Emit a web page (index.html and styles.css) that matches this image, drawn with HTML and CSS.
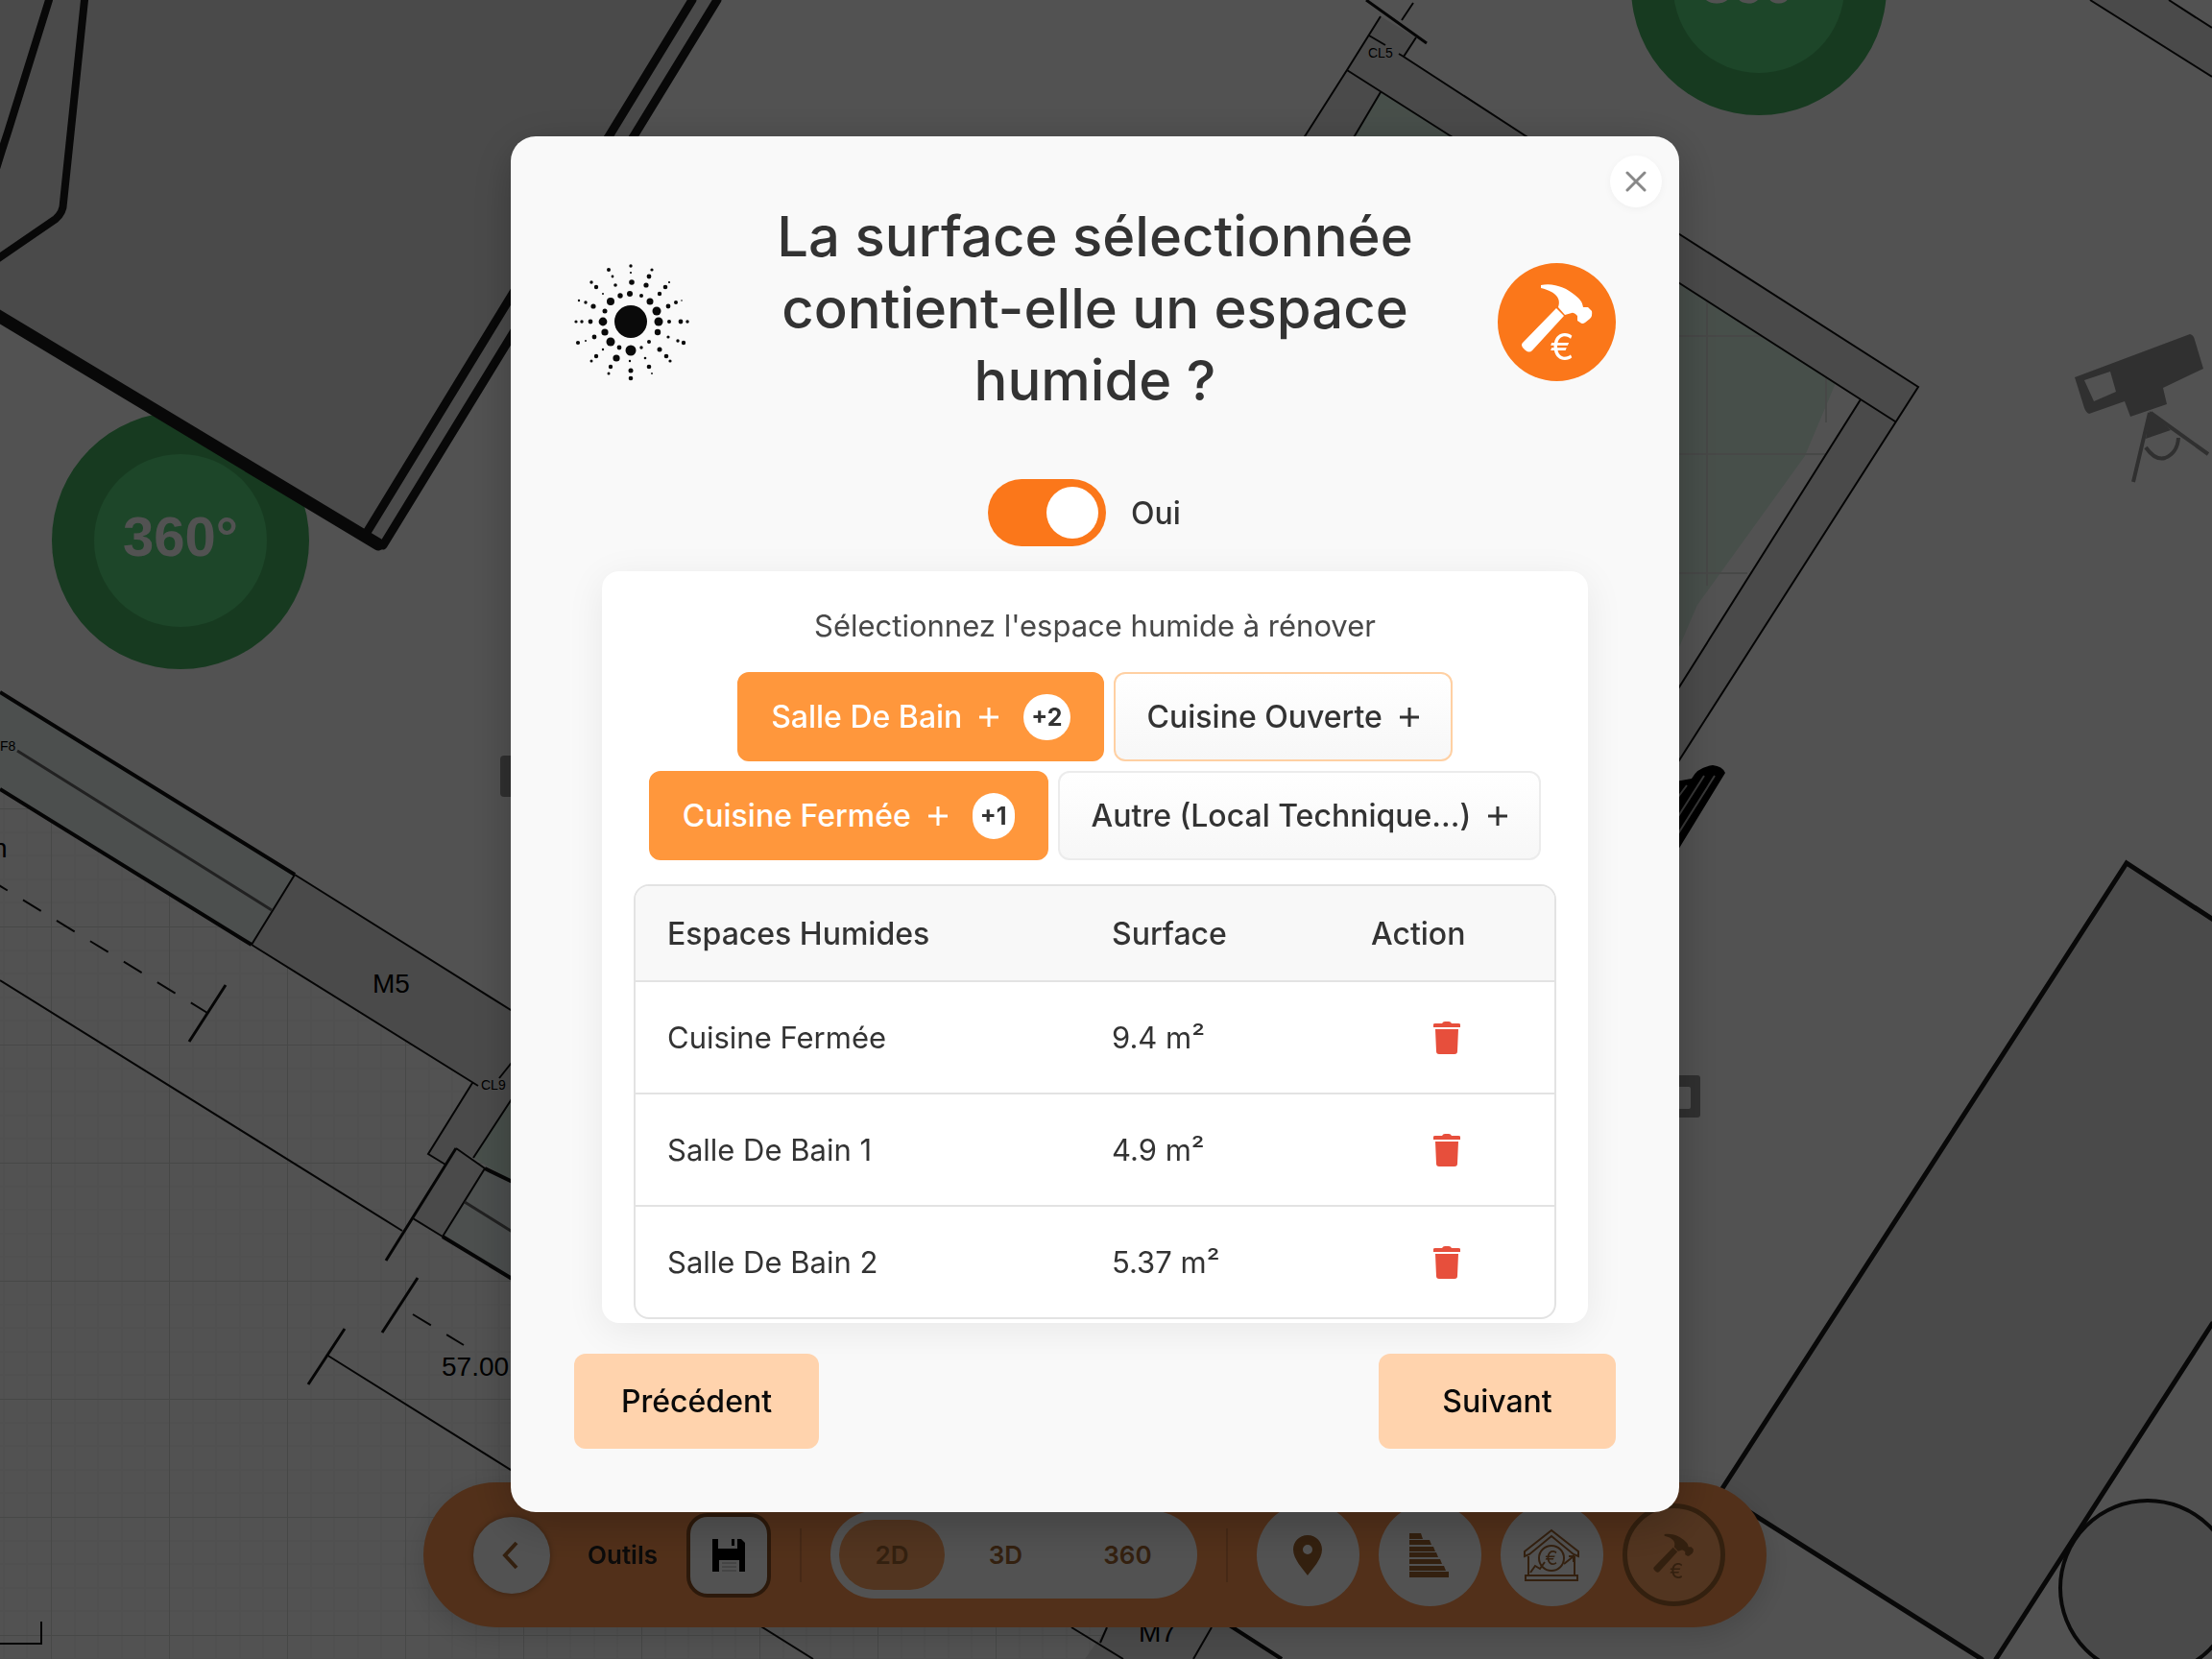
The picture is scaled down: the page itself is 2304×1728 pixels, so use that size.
FILE: index.html
```html
<!DOCTYPE html>
<html lang="fr">
<head>
    <meta charset="UTF-8">
    <meta name="viewport" content="width=device-width, initial-scale=1.0">
    <title>Espace humide</title>
    <link rel="stylesheet" href="styles.css">
</head>
<body>
    <!-- Plan 2D -->
    <svg class="plan" viewBox="0 0 2304 1728" preserveAspectRatio="xMidYMid slice" aria-hidden="true">
        <defs>
            <pattern id="grid" x="53" y="104" width="123" height="123" patternUnits="userSpaceOnUse">
                <path class="grid-minor" d="M25 0V123M49 0V123M74 0V123M98 0V123M0 25H123M0 49H123M0 74H123M0 98H123"/>
                <path class="grid-major" d="M0 0V123M0 0H123"/>
            </pattern>
        </defs>
        <rect class="floor" width="2304" height="1728"/>
        <path fill="url(#grid)" d="M0 721L307 911L532 1052L1276 1530V1728H0Z"/>

        <!-- murs -->
        <path class="wall" d="M307 911L540 1057V1157L262 984Z"/>
        <path class="wall" d="M492 1128L540 1098V1140L493 1206L475 1196L464 1213L446 1202Z"/>
        <path class="wall" d="M475 1196L505 1217L461 1288L430 1269Z"/>
        <path class="wall" d="M1438 17L1475 39L1462 59L1602 150H1524L1403 73Z"/>
        <path class="wall" d="M1403 73L1438 96L1406 150H1354Z"/>
        <path class="wall" d="M2177 0L2304 80V29L2259 0Z"/>
        <path class="wall" d="M1740 238L1998 403L1740 806V730L1938 416L1740 289Z"/>
        <path class="wall" d="M1153 1695L1130 1728H1335L1276 1690Z"/>

        <!-- vitrages -->
        <path class="glass" d="M0 721L307 911L262 984L0 822Z"/>
        <path class="glass" d="M505 1217L540 1235V1336L461 1288Z"/>
        <path class="tint" d="M493 1206L540 1134V1234Z"/>
        <path class="tint" d="M1438 96L1524 150H1406Z"/>
        <path class="tint" d="M1740 289L1912 399L1880 475L1768 630L1740 695Z"/>
        <path class="grid-major" d="M1778 314V610M1902 393V440M1749 350H1835M1749 473H1902M1749 597H1820"/>

        <path class="line" d="M307 911L540 1057M262 984L498 1131M307 911L262 984M0 1021L419 1282M340 1411L847 1728
            M492 1128L446 1202L464 1213M493 1206L540 1134M540 1098L520 1123M475 1196L505 1217L461 1288L430 1269
            M1438 17L1403 73L1354 150M1472 3L1460 21M1475 39L1462 59L1602 150M1457 56L1462 59M1426 37L1443 47
            M1403 73L1524 150M1438 96L1406 150M2177 0L2304 80M2259 0L2304 29
            M1740 238L1998 403L1740 806M1740 289L1938 416L1740 730M1938 416L1974 439
            M1116 1695L1170 1728M1153 1695L1146 1711M1262 1695L1243 1728M0 1712H43V1689"/>
        <path class="line line-mid" d="M18 782L283 948M484 1252L540 1287"/>
        <path class="line line-bold" d="M0 721L307 911M0 822L262 984M505 1217L540 1234M461 1288L540 1336M1276 1690L1335 1728"/>
        <path class="line line-tick" d="M235 1026L197 1085M475 1196L402 1313M435 1331L398 1388M359 1384L321 1442M1423 0L1486 45"/>
        <path class="line" stroke-dasharray="22 19" d="M-11 916L216 1055M430 1369L483 1401"/>

        <!-- points 360 -->
        <circle class="spot" cx="188" cy="563" r="134"/>
        <circle class="spot-inner" cx="188" cy="563" r="90"/>
        <text class="spot-text" x="188" y="579" text-anchor="middle">360°</text>
        <circle class="spot" cx="1832" cy="-13" r="133"/>
        <circle class="spot-inner" cx="1832" cy="-13" r="89"/>
        <text class="spot-text" x="1832" y="3" text-anchor="middle">360°</text>

        <!-- mobilier -->
        <path class="wall" d="M0 0H747L400 571L0 330Z"/>
        <path class="furniture" stroke-width="13" d="M-10 324L394 567"/>
        <path class="furniture" stroke-width="9" d="M721 0L383 553M747 0L399 568"/>
        <path class="furniture" stroke-width="8" d="M51 0L8 138Q2 156 -4 176M88 0L66 211Q66 221 58 228L-6 272"/>
        <path class="wall" d="M2215 899L2304 957V1379L2079 1728H2064L1791 1555Z"/>
        <circle class="wall" cx="2237" cy="1654" r="91"/>
        <circle class="furniture" stroke-width="4" cx="2237" cy="1654" r="91"/>
        <path class="furniture" stroke-width="5" d="M2310 961L2215 899L1791 1555L2064 1728M2079 1728L2304 1379"/>
        <path d="M1745 814L1762 811Q1768 799 1784 797Q1794 798 1797 805L1745 890Z"/>
        <path class="stripe" d="M1775 808L1745 855M1786 808L1745 873M1757 818L1745 834"/>

        <!-- cameras -->
        <path class="camera" d="M2161 393L2281 348Q2285 349 2286 354L2295 384L2253 404L2257 421L2219 434L2213 418L2176 431Q2173 430 2171 425Z"/>
        <path class="floor" d="M2171 396L2198 387L2204 408L2181 418Z"/>
        <path class="camera" d="M2239 428L2261 448L2235 457Z"/>
        <path class="camera-leg" d="M2239 430L2222 502M2240 430L2300 473M2235 466Q2245 480 2255 477Q2268 472 2269 456"/>
        <rect class="camera" x="521" y="787" width="30" height="43" rx="4"/>
        <rect class="camera" x="1730" y="1120" width="41" height="44" rx="3"/>
        <rect class="floor" x="1730" y="1132" width="31" height="23" rx="2"/>

        <text class="plan-text" x="388" y="1034">M5</text>
        <text class="plan-text" x="1186" y="1710">M7</text>
        <text class="plan-text" x="460" y="1433">57.00</text>
        <text class="plan-text" x="-8" y="893">n</text>
        <text class="plan-label" x="0" y="782">F8</text>
        <text class="plan-label" x="501" y="1135">CL9</text>
        <text class="plan-label" x="1425" y="60">CL5</text>
    </svg>

    <!-- Barre d'outils -->
    <nav class="toolbar">
        <div class="toolbar-inner">
            <button class="back" aria-label="Retour">
                <svg width="20" height="32" viewBox="0 0 20 32"><path d="M15 3L3 16L15 29" fill="none" stroke="currentColor" stroke-width="4"/></svg>
            </button>
            <span class="toolbar-title">Outils</span>
            <button class="save" aria-label="Enregistrer">
                <svg width="36" height="36" viewBox="0 0 36 36">
                    <path d="M1 1H7V11H27V1H31L35 5V35H29V23H8V35H1Z"/>
                    <path d="M21 1H24V8H21Z"/>
                    <path d="M11 26H26M11 30H26M11 34H26" stroke="#aaa" stroke-width="1"/>
                </svg>
            </button>
            <span class="divider"></span>
            <div class="views">
                <button class="view view-active">2D</button>
                <button class="view">3D</button>
                <button class="view">360</button>
            </div>
            <span class="divider"></span>
            <div class="tools">
                <button class="tool" aria-label="Adresse">
                    <svg width="32" height="42" viewBox="0 0 32 42"><path fill="currentColor" fill-rule="evenodd" d="M16 0C7 0 1 7 1 15C1 25 11 35 16 42C21 35 31 25 31 15C31 7 25 0 16 0ZM16 10A5 5 0 1 1 16 20A5 5 0 1 1 16 10Z"/></svg>
                </button>
                <button class="tool" aria-label="Escalier">
                    <svg width="42" height="46" viewBox="0 0 42 46"><path fill="currentColor" d="M0 0H12L14 6H0ZM0 7H21L23 12H0ZM0 14H25L27 19H0ZM0 20H28L30 25H0ZM0 27H32L34 32H0ZM0 34H36L38 39H0ZM0 40H41V46H0Z"/></svg>
                </button>
                <button class="tool" aria-label="Estimation">
                    <svg width="58" height="56" viewBox="0 0 58 56" fill="none" stroke="currentColor" stroke-width="2">
                        <path d="M1 24L29 2L57 24V29L52 27L29 8L6 27L1 29ZM5 29V48M53 29V48M2 49H56V54H2Z"/>
                        <circle cx="29" cy="31" r="13"/>
                        <path d="M7 46L12 39L17 42L22 35M42 37L52 29M47 29H52V35"/>
                        <text class="icon-euro" x="29" y="38" text-anchor="middle" font-size="20">€</text>
                    </svg>
                </button>
                <button class="tool tool-active" aria-label="Travaux">
                    <svg width="70" height="70" viewBox="0 0 123 123" fill="currentColor">
                        <path d="M45 23C58 20 72 26 80 33C86 38 88 40 89 46L94 46L98 50Q99 55 96 58L91 62Q88 64 86 62L83 60L83 55Q79 51 77 52L70 54L63 46C66 38 62 30 45 26Z"/>
                        <path d="M61 47L69 55L36 91Q33 94 29 91L26 88Q24 85 26 83Z"/>
                        <text class="icon-euro" x="67" y="104" text-anchor="middle" font-size="38">€</text>
                    </svg>
                </button>
            </div>
        </div>
    </nav>

    <!-- Fenetre -->
    <div class="overlay">
        <div class="modal" role="dialog" aria-labelledby="modal-title">
            <button class="close" aria-label="Fermer">
                <svg width="22" height="22" viewBox="0 0 22 22"><path d="M2 2L20 20M20 2L2 20" stroke="currentColor" stroke-width="3" stroke-linecap="round"/></svg>
            </button>

            <div class="modal-header">
                <svg class="badge-icon" viewBox="-59 -61 123 123" fill="#0a0a0a">
                    <circle r="17"/>
                    <circle cx="-1" cy="-29" r="3"/><circle cx="11" cy="-27" r="2"/><circle cx="20" cy="-21" r="3.5"/><circle cx="27" cy="-11" r="4.5"/>
                    <circle cx="29" cy="0" r="4.5"/><circle cx="28" cy="11" r="3.2"/><circle cx="19" cy="21" r="2"/><circle cx="11" cy="27" r="1.7"/>
                    <circle cx="0" cy="30" r="5.5"/><circle cx="-12" cy="27" r="2.4"/><circle cx="-21" cy="21" r="4.5"/><circle cx="-27" cy="11" r="3.6"/>
                    <circle cx="-29" cy="0" r="4.4"/><circle cx="-27" cy="-11" r="2.5"/><circle cx="-21" cy="-21" r="4"/><circle cx="-11" cy="-27" r="2.7"/>
                    <circle cx="1" cy="-41" r="2.8"/><circle cx="16" cy="-38" r="2.6"/><circle cx="30" cy="-29" r="2.2"/><circle cx="39" cy="-16" r="2.4"/>
                    <circle cx="40" cy="0" r="2"/><circle cx="39" cy="16" r="1.6"/><circle cx="30" cy="29" r="2.5"/><circle cx="15" cy="38" r="1.3"/>
                    <circle cx="-1" cy="41" r="1.2"/><circle cx="-15" cy="38" r="3.6"/><circle cx="-29" cy="29" r="1.2"/><circle cx="-38" cy="16" r="2.4"/>
                    <circle cx="-42" cy="0" r="2.4"/><circle cx="-39" cy="-16" r="2.6"/><circle cx="-29" cy="-29" r="1"/><circle cx="-16" cy="-38" r="1.8"/>
                    <circle cx="0" cy="-51" r="1.1"/><circle cx="19" cy="-47" r="2.4"/><circle cx="36" cy="-36" r="2.3"/><circle cx="47" cy="-20" r="2"/>
                    <circle cx="52" cy="0" r="2.4"/><circle cx="49" cy="20" r="1.7"/><circle cx="37" cy="36" r="2.3"/><circle cx="19" cy="47" r="2.3"/>
                    <circle cx="0" cy="51" r="2.5"/><circle cx="-21" cy="47" r="2.2"/><circle cx="-36" cy="36" r="2.2"/><circle cx="-47" cy="20" r="1"/>
                    <circle cx="-51" cy="0" r="1.7"/><circle cx="-47" cy="-20" r="1.7"/><circle cx="-36" cy="-36" r="2.2"/><circle cx="-19" cy="-47" r="1.4"/>
                    <circle cx="0" cy="-58" r="1.7"/><circle cx="22" cy="-54" r="1.6"/><circle cx="40" cy="-41" r="1.1"/><circle cx="53" cy="-22" r=".8"/>
                    <circle cx="59" cy="0" r="1.7"/><circle cx="55" cy="22" r="2.2"/><circle cx="41" cy="41" r="1.6"/><circle cx="22" cy="54" r=".9"/>
                    <circle cx="0" cy="59" r="2.3"/><circle cx="-23" cy="54" r="1.5"/><circle cx="-41" cy="41" r="1.5"/><circle cx="-55" cy="22" r="2.1"/>
                    <circle cx="-57" cy="0" r="1.6"/><circle cx="-54" cy="-22" r="1.2"/><circle cx="-41" cy="-41" r="1.7"/><circle cx="-23" cy="-54" r="2"/>
                </svg>
                <h1 class="modal-title" id="modal-title">La surface sélectionnée contient-elle un espace humide ?</h1>
                <svg class="badge-icon" viewBox="0 0 123 123" fill="#fff">
                    <circle cx="61.5" cy="61.5" r="61.5" fill="#fb771a"/>
                    <path d="M45 23C58 20 72 26 80 33C86 38 88 40 89 46L94 46L98 50Q99 55 96 58L91 62Q88 64 86 62L83 60L83 55Q79 51 77 52L70 54L63 46C66 38 62 30 45 26Z"/>
                    <path d="M61 47L69 55L36 91Q33 94 29 91L26 88Q24 85 26 83Z"/>
                    <text class="icon-euro" x="67" y="101" text-anchor="middle" font-size="38">€</text>
                </svg>
            </div>

            <label class="switch">
                <input class="switch-input" type="checkbox" checked>
                <span>Oui</span>
            </label>

            <div class="card">
                <p class="card-text">Sélectionnez l'espace humide à rénover</p>
                <div class="chips">
                    <button class="chip chip-active">Salle De Bain
                        <svg class="plus" viewBox="0 0 20 20"><path d="M10 0V20M0 10H20"/></svg>
                        <span class="count">+2</span>
                    </button>
                    <button class="chip chip-hover">Cuisine Ouverte
                        <svg class="plus" viewBox="0 0 20 20"><path d="M10 0V20M0 10H20"/></svg>
                    </button>
                    <button class="chip chip-active">Cuisine Fermée
                        <svg class="plus" viewBox="0 0 20 20"><path d="M10 0V20M0 10H20"/></svg>
                        <span class="count">+1</span>
                    </button>
                    <button class="chip">Autre (Local Technique...)
                        <svg class="plus" viewBox="0 0 20 20"><path d="M10 0V20M0 10H20"/></svg>
                    </button>
                </div>
                <table class="rooms">
                    <thead>
                        <tr><th class="col-name">Espaces Humides</th><th class="col-area">Surface</th><th>Action</th></tr>
                    </thead>
                    <tbody>
                        <tr>
                            <td>Cuisine Fermée</td>
                            <td>9.4 m²</td>
                            <td><button class="delete" aria-label="Supprimer"><svg width="28" height="34" viewBox="0 0 28 34"><path d="M0 3Q0 2 2 2H9Q10 0 12 0H16Q18 0 19 2H26Q28 2 28 3V6H0ZM2 8H26L25 31Q25 34 22 34H6Q3 34 3 31Z"/></svg></button></td>
                        </tr>
                        <tr>
                            <td>Salle De Bain 1</td>
                            <td>4.9 m²</td>
                            <td><button class="delete" aria-label="Supprimer"><svg width="28" height="34" viewBox="0 0 28 34"><path d="M0 3Q0 2 2 2H9Q10 0 12 0H16Q18 0 19 2H26Q28 2 28 3V6H0ZM2 8H26L25 31Q25 34 22 34H6Q3 34 3 31Z"/></svg></button></td>
                        </tr>
                        <tr>
                            <td>Salle De Bain 2</td>
                            <td>5.37 m²</td>
                            <td><button class="delete" aria-label="Supprimer"><svg width="28" height="34" viewBox="0 0 28 34"><path d="M0 3Q0 2 2 2H9Q10 0 12 0H16Q18 0 19 2H26Q28 2 28 3V6H0ZM2 8H26L25 31Q25 34 22 34H6Q3 34 3 31Z"/></svg></button></td>
                        </tr>
                    </tbody>
                </table>
            </div>

            <div class="modal-footer">
                <button class="step">Précédent</button>
                <button class="step">Suivant</button>
            </div>
        </div>
    </div>
</body>
</html>
```

FILE: styles.css
```css
* {
    box-sizing: border-box;
}

body {
    margin: 0;
    overflow: hidden;
    background-color: #fff;
    font-family: Inter, "Liberation Sans", sans-serif;
    font-size: 32px;
    line-height: 39px;
    color: #333;
}

button {
    font: inherit;
    color: inherit;
    border: none;
    padding: 0;
    cursor: pointer;
    display: flex;
    align-items: center;
    justify-content: center;
}

/* Plan */
.plan {
    position: fixed;
    top: 0;
    left: 0;
    width: 100%;
    height: 100%;
}

.floor {
    fill: #fff;
}

.wall {
    fill: #e7e7e7;
}

.glass {
    fill: #ecf5f3;
}

.tint {
    fill: #def5e7;
}

.grid-minor {
    fill: none;
    stroke: #f8f8f8;
    stroke-width: 2;
}

.grid-major {
    fill: none;
    stroke: #dcdfdd;
    stroke-width: 2;
}

.line {
    fill: none;
    stroke: #111;
    stroke-width: 2;
}

.line-mid {
    stroke: #666;
    stroke-width: 3;
}

.line-bold {
    stroke-width: 4;
}

.line-tick {
    stroke-width: 3;
}

.furniture {
    fill: none;
    stroke: #1a1a1a;
    stroke-linecap: round;
}

.stripe {
    fill: none;
    stroke: #aaa;
    stroke-width: 2;
}

.camera {
    fill: #969696;
}

.camera-leg {
    fill: none;
    stroke: #969696;
    stroke-width: 4;
}

.spot {
    fill: #48b564;
}

.spot-inner {
    fill: #5bd880;
}

.spot-text {
    font: bold 58px "Liberation Sans", sans-serif;
    fill: #fff;
}

.plan-text {
    font: 28px "Liberation Sans", sans-serif;
}

.plan-label {
    font: 14px "Liberation Sans", sans-serif;
}

/* Barre d'outils */
.toolbar {
    position: fixed;
    left: 0;
    right: 0;
    bottom: 33px;
    padding-right: 23px;
    display: flex;
    justify-content: center;
}

.toolbar-inner {
    display: flex;
    align-items: center;
    gap: 30px;
    height: 151px;
    padding: 0 43px 0 52px;
    border-radius: 76px;
    background-color: #fd9651;
    box-shadow: 0 8px 32px rgba(0, 0, 0, 0.15);
    color: #a0642f;
    font-size: 26px;
    font-weight: 600;
}

.back {
    width: 80px;
    height: 80px;
    border-radius: 50%;
    background-color: #fff;
    box-shadow: 0 0 6px rgba(0, 0, 0, 0.3);
}

.toolbar-title {
    margin-left: 9px;
    color: #222;
}

.save {
    width: 88px;
    height: 88px;
    border: 4px solid #8a4f22;
    border-radius: 22px;
    background-color: #fff;
}

.divider {
    width: 2px;
    height: 56px;
    background-color: #d98045;
}

.views {
    display: flex;
    padding: 9px;
    border-radius: 46px;
    background-color: #fff;
}

.view {
    width: 127px;
    height: 73px;
    border-radius: 37px;
    background-color: transparent;
}

.view-active {
    width: 110px;
    background-color: #fda463;
}

.tools {
    display: flex;
    gap: 20px;
}

.tool {
    width: 107px;
    height: 107px;
    border-radius: 50%;
    background-color: #fff;
}

.tool-active {
    border: 5px solid #a0642f;
    background-color: #fda463;
}

.icon-euro {
    font-family: Inter, sans-serif;
    font-weight: 400;
    fill: currentColor;
    stroke: none;
}

/* Fenetre */
.overlay {
    position: fixed;
    inset: 0;
    padding: 0 23px 11px 0;
    display: flex;
    align-items: center;
    justify-content: center;
    background-color: rgba(0, 0, 0, 0.68);
}

.modal {
    position: relative;
    width: 100%;
    max-width: 1217px;
    padding: 67px 66px 66px;
    border-radius: 26px;
    background-color: #f9f9f9;
    box-shadow: 0 10px 50px rgba(0, 0, 0, 0.25);
}

.close {
    position: absolute;
    top: 20px;
    right: 18px;
    width: 54px;
    height: 54px;
    border-radius: 50%;
    background-color: #fff;
    color: #888;
    box-shadow: 0 2px 8px rgba(0, 0, 0, 0.04);
}

.modal-header {
    display: flex;
    align-items: center;
    justify-content: space-between;
    gap: 60px;
    color: #fff;
}

.badge-icon {
    flex: none;
    width: 123px;
    height: 123px;
}

.modal-title {
    max-width: 700px;
    margin: 0 0 28px;
    font-size: 58px;
    line-height: 75px;
    font-weight: 500;
    text-align: center;
    color: #333;
}

.switch {
    display: flex;
    align-items: center;
    justify-content: center;
    gap: 26px;
    margin: 37px 0 26px;
    padding-right: 22px;
    font-weight: 500;
}

.switch-input {
    appearance: none;
    width: 123px;
    height: 70px;
    margin: 0;
    padding: 8px;
    border-radius: 35px;
    background-color: #fb771a;
    display: flex;
    justify-content: flex-end;
    cursor: pointer;
}

.switch-input:not(:checked) {
    background-color: #ccc;
    justify-content: flex-start;
}

.switch-input::before {
    content: "";
    width: 54px;
    height: 54px;
    border-radius: 50%;
    background-color: #fff;
}

.card {
    margin: 0 29px 32px;
    padding: 33px 33px 4px;
    border-radius: 18px;
    background-color: #fff;
    box-shadow: 0 8px 40px rgba(0, 0, 0, 0.07);
}

.card-text {
    margin: 0 0 24px;
    font-size: 31px;
    line-height: 48px;
    text-align: center;
    color: #484848;
}

.chips {
    display: flex;
    flex-wrap: wrap;
    justify-content: center;
    gap: 10px;
    margin-bottom: 25px;
}

.chip {
    height: 93px;
    padding: 0 33px;
    gap: 18px;
    border: 2px solid #ececec;
    border-radius: 12px;
    background: linear-gradient(#fff, #f7f7f7);
    font-weight: 500;
}

.chip-hover {
    border-color: #ffd0a3;
}

.chip-active {
    border-color: #ff973c;
    background: #ff973c;
    color: #fff;
}

.plus {
    width: 20px;
    height: 20px;
    fill: none;
    stroke: currentColor;
    stroke-width: 3;
}

.count {
    height: 48px;
    padding: 0 8px;
    margin-left: 8px;
    border-radius: 24px;
    background-color: #fff;
    color: #333;
    font-size: 25px;
    line-height: 48px;
    font-weight: 700;
}

.rooms {
    width: 100%;
    table-layout: fixed;
    border: 2px solid #e3e3e3;
    border-radius: 16px;
    border-spacing: 0;
    overflow: hidden;
}

.rooms th {
    padding: 30px 33px 29px;
    border-bottom: 2px solid #e3e3e3;
    background-color: #f8f8f8;
    font-weight: 500;
    text-align: left;
}

.rooms td {
    padding: 38px 33px;
    border-bottom: 2px solid #e3e3e3;
    font-size: 31px;
}

.rooms tr:last-child td {
    border-bottom: none;
}

.col-name {
    width: 463px;
}

.col-area {
    width: 270px;
}

.delete {
    margin: 0 auto;
    background-color: transparent;
    fill: #e74f3c;
}

.modal-footer {
    display: flex;
    justify-content: space-between;
}

.step {
    height: 99px;
    min-width: 247px;
    padding: 0 49px;
    border-radius: 12px;
    background-color: #ffd3ad;
    color: #0a0a0a;
    font-weight: 500;
}
```
